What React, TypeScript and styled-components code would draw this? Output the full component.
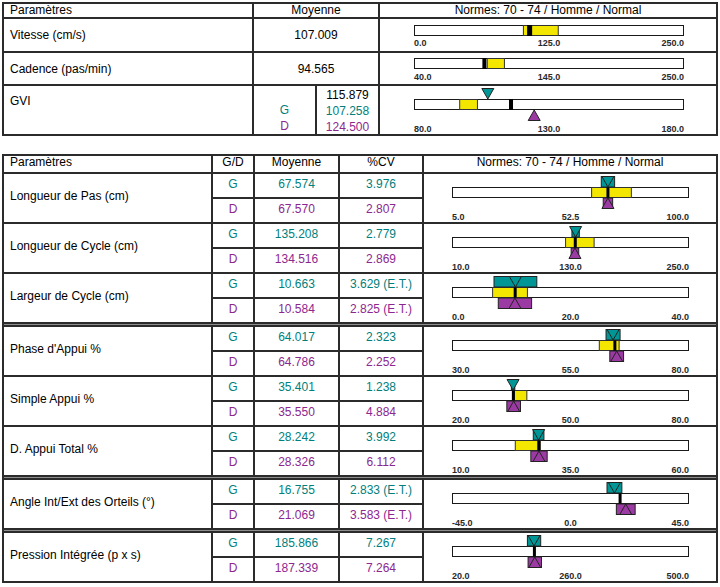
import React from "react";
import styled, { createGlobalStyle } from "styled-components";

// COLORS
const LINE = "#2b2b2b";
const TEAL = "#007f7d";
const PURPLE = "#8c2790";
const TEAL_FILL = "#009695";
const PURPLE_FILL = "#9c3aa3";
const YELLOW = "#f3e700";

type Side = { mean: number; sd: number };

interface ScaleChartProps {
  width: number;
  min: number;
  mid: number;
  max: number;
  norm?: [number, number];
  mean: number;
  meanWidth?: number;
  g?: Side;
  d?: Side;
  boxes?: boolean;
  labelGap?: number;
}

const GlobalStyle = createGlobalStyle`
  html, body {
    margin: 0;
    background: #fff;
  }
  body {
    font-family: "Liberation Sans", Arial, sans-serif;
    font-size: 12px;
    color: #000;
  }
`;

const Page = styled.div`
  width: 720px;
  box-sizing: border-box;
  padding: 2px 2px 0;
  display: flex;
  flex-direction: column;
  gap: 18px;
`;

// TOP TABLE
const SummaryTable = styled.div`
  display: grid;
  grid-template-columns: 248px 61px 61px 1fr;
  grid-template-rows: 13px 32px 31px 48px;
  gap: 2px;
  background: ${LINE};
  border: 2px solid ${LINE};
`;

const Cell = styled.div<{ $center?: boolean; $span?: number }>`
  background: #fff;
  display: flex;
  align-items: center;
  justify-content: ${(p) => (p.$center ? "center" : "flex-start")};
  padding: 0 6px;
  min-width: 0;
  overflow: hidden;
  white-space: nowrap;
  grid-column: ${(p) => (p.$span ? `span ${p.$span}` : "auto")};
`;

const HeadCell = styled(Cell)`
  align-items: flex-start;
  line-height: 12px;
`;

const TopLabelCell = styled(Cell)`
  align-items: flex-start;
  padding-top: 9px;
  line-height: 12px;
`;

const Stack = styled.div`
  background: #fff;
  display: flex;
  flex-direction: column;
  align-items: center;
  padding-top: 1px;
  line-height: 16px;
`;

const Tone = styled.span<{ $tone?: "g" | "d" }>`
  color: ${(p) => (p.$tone === "g" ? TEAL : p.$tone === "d" ? PURPLE : "#000")};
  height: 16px;
`;

const ChartCell = styled.div<{ $left: number; $top: number }>`
  background: #fff;
  display: flex;
  flex-direction: column;
  align-items: flex-start;
  padding-left: ${(p) => p.$left}px;
  padding-top: ${(p) => p.$top}px;
  overflow: hidden;
`;

// DETAIL TABLE
const DetailTable = styled.div`
  display: flex;
  flex-direction: column;
  gap: 2px;
  background: ${LINE};
  border: 2px solid ${LINE};
`;

const DetailRow = styled.div<{ $rows: string }>`
  display: grid;
  grid-template-columns: 207px 40px 83px 82px 1fr;
  grid-template-rows: ${(p) => p.$rows};
  gap: 2px;
`;

const GroupRule = styled.div`
  height: 1px;
  background: #8d8d8d;
`;

const ParamCell = styled(Cell)`
  grid-row: span 2;
  padding-bottom: 4px;
`;

const ValueCell = styled(Cell)<{ $tone: "g" | "d" }>`
  color: ${(p) => (p.$tone === "g" ? TEAL : PURPLE)};
  justify-content: center;
  padding-bottom: 4px;
`;

const GroupChartCell = styled(ChartCell)`
  grid-row: span 2;
`;

// CHART
const ChartWrap = styled.div<{ $w: number }>`
  width: ${(p) => p.$w}px;
  display: flex;
  flex-direction: column;
`;

const Plot = styled.svg`
  display: block;
  overflow: visible;
`;

const ScaleLabels = styled.div<{ $gap: number }>`
  display: grid;
  grid-template-columns: 1fr auto 1fr;
  margin-top: ${(p) => p.$gap}px;
  font-size: 9px;
  font-weight: bold;
  line-height: 10px;
  color: #2a2a2a;

  span:first-child {
    justify-self: start;
  }
  span:last-child {
    justify-self: end;
  }
`;

const ScaleChart: React.FC<ScaleChartProps> = ({
  width,
  min,
  mid,
  max,
  norm,
  mean,
  meanWidth = 3,
  g,
  d,
  boxes,
  labelGap = 3,
}) => {
  const x = (v: number) => ((v - min) / (max - min)) * (width - 1) + 0.5;
  const withMarkers = !!(g || d);
  const barTop = withMarkers ? 11 : 0;
  const height = withMarkers ? 33 : 11;
  const tri = 6;

  return (
    <ChartWrap $w={width}>
      <Plot width={width} height={height}>
        <rect x={0.5} y={barTop + 0.5} width={width - 1} height={10} fill="#fff" stroke="#1a1a1a" />
        {norm && (
          <rect
            x={x(norm[0])}
            y={barTop + 0.5}
            width={x(norm[1]) - x(norm[0])}
            height={10}
            fill={YELLOW}
            stroke="#333"
          />
        )}
        <rect x={x(mean) - meanWidth / 2} y={barTop} width={meanWidth} height={11} fill="#000" />

        {g && boxes && (
          <rect
            x={x(g.mean - g.sd)}
            y={0.5}
            width={x(g.mean + g.sd) - x(g.mean - g.sd)}
            height={10.5}
            fill={TEAL_FILL}
            stroke="#222"
          />
        )}
        {g && (
          <polygon
            points={`${x(g.mean) - tri},0.5 ${x(g.mean) + tri},0.5 ${x(g.mean)},${barTop}`}
            fill={TEAL_FILL}
            stroke="#222"
          />
        )}

        {d && boxes && (
          <rect
            x={x(d.mean - d.sd)}
            y={barTop + 11}
            width={x(d.mean + d.sd) - x(d.mean - d.sd)}
            height={10.5}
            fill={PURPLE_FILL}
            stroke="#222"
          />
        )}
        {d && (
          <polygon
            points={`${x(d.mean) - tri},${height - 0.5} ${x(d.mean) + tri},${height - 0.5} ${x(d.mean)},${barTop + 11}`}
            fill={PURPLE_FILL}
            stroke="#222"
          />
        )}
      </Plot>
      <ScaleLabels $gap={labelGap}>
        <span>{min.toFixed(1)}</span>
        <span>{mid.toFixed(1)}</span>
        <span>{max.toFixed(1)}</span>
      </ScaleLabels>
    </ChartWrap>
  );
};

// DATA
interface DetailParam {
  label: string;
  g: { mean: number; cv: number };
  d: { mean: number; cv: number };
  et?: boolean;
  scale: [number, number, number];
  norm?: [number, number];
}

type Group = DetailParam[];

const groups: Group[] = [
  [
    {
      label: "Longueur de Pas (cm)",
      g: { mean: 67.574, cv: 3.976 },
      d: { mean: 67.57, cv: 2.807 },
      scale: [5, 52.5, 100],
      norm: [61, 77],
    },
    {
      label: "Longueur de Cycle (cm)",
      g: { mean: 135.208, cv: 2.779 },
      d: { mean: 134.516, cv: 2.869 },
      scale: [10, 130, 250],
      norm: [125, 154],
    },
    {
      label: "Largeur de Cycle (cm)",
      g: { mean: 10.663, cv: 3.629 },
      d: { mean: 10.584, cv: 2.825 },
      et: true,
      scale: [0, 20, 40],
      norm: [6.8, 12.7],
    },
  ],
  [
    {
      label: "Phase d'Appui %",
      g: { mean: 64.017, cv: 2.323 },
      d: { mean: 64.786, cv: 2.252 },
      scale: [30, 55, 80],
      norm: [61.1, 65.3],
    },
    {
      label: "Simple Appui %",
      g: { mean: 35.401, cv: 1.238 },
      d: { mean: 35.55, cv: 4.884 },
      scale: [20, 50, 80],
      norm: [35.7, 38.9],
    },
    {
      label: "D. Appui Total %",
      g: { mean: 28.242, cv: 3.992 },
      d: { mean: 28.326, cv: 6.112 },
      scale: [10, 35, 60],
      norm: [23.3, 28.6],
    },
  ],
  [
    {
      label: "Angle Int/Ext des Orteils (°)",
      g: { mean: 16.755, cv: 2.833 },
      d: { mean: 21.069, cv: 3.583 },
      et: true,
      scale: [-45, 0, 45],
    },
  ],
  [
    {
      label: "Pression Intégrée (p x s)",
      g: { mean: 185.866, cv: 7.267 },
      d: { mean: 187.339, cv: 7.264 },
      scale: [20, 260, 500],
    },
  ],
];

const sdOf = (side: { mean: number; cv: number }, et?: boolean) =>
  et ? side.cv : (side.cv * side.mean) / 100;

const cvText = (cv: number, et?: boolean) => (et ? `${cv.toFixed(3)} (E.T.)` : cv.toFixed(3));

const DetailGroupRow: React.FC<{ p: DetailParam }> = ({ p }) => (
  <DetailRow $rows="23px 23px">
    <ParamCell>{p.label}</ParamCell>
    <ValueCell $tone="g">G</ValueCell>
    <ValueCell $tone="g">{p.g.mean.toFixed(3)}</ValueCell>
    <ValueCell $tone="g">{cvText(p.g.cv, p.et)}</ValueCell>
    <GroupChartCell $left={28} $top={2}>
      <ScaleChart
        width={237}
        min={p.scale[0]}
        mid={p.scale[1]}
        max={p.scale[2]}
        norm={p.norm}
        mean={(p.g.mean + p.d.mean) / 2}
        g={{ mean: p.g.mean, sd: sdOf(p.g, p.et) }}
        d={{ mean: p.d.mean, sd: sdOf(p.d, p.et) }}
        boxes
      />
    </GroupChartCell>
    <ValueCell $tone="d">D</ValueCell>
    <ValueCell $tone="d">{p.d.mean.toFixed(3)}</ValueCell>
    <ValueCell $tone="d">{cvText(p.d.cv, p.et)}</ValueCell>
  </DetailRow>
);

const NORMES = "Normes: 70 - 74 / Homme / Normal";

export default function App() {
  return (
    <>
      <GlobalStyle />
      <Page>
        <SummaryTable>
          <HeadCell>Paramètres</HeadCell>
          <HeadCell $center $span={2}>Moyenne</HeadCell>
          <HeadCell $center>{NORMES}</HeadCell>

          <Cell>Vitesse (cm/s)</Cell>
          <Cell $center $span={2}>107.009</Cell>
          <ChartCell $left={34} $top={6}>
            <ScaleChart width={270} min={0} mid={125} max={250} norm={[101.2, 133.6]} mean={107.009} meanWidth={5} labelGap={2} />
          </ChartCell>

          <Cell>Cadence (pas/min)</Cell>
          <Cell $center $span={2}>94.565</Cell>
          <ChartCell $left={34} $top={5}>
            <ScaleChart width={270} min={40} mid={145} max={250} norm={[96.8, 110.2]} mean={94.565} meanWidth={4} />
          </ChartCell>

          <TopLabelCell>GVI</TopLabelCell>
          <Stack>
            <Tone />
            <Tone $tone="g">G</Tone>
            <Tone $tone="d">D</Tone>
          </Stack>
          <Stack>
            <Tone>115.879</Tone>
            <Tone $tone="g">107.258</Tone>
            <Tone $tone="d">124.500</Tone>
          </Stack>
          <ChartCell $left={34} $top={2}>
            <ScaleChart
              width={270}
              min={80}
              mid={130}
              max={180}
              norm={[96.8, 103.4]}
              mean={115.879}
              meanWidth={4}
              g={{ mean: 107.258, sd: 0 }}
              d={{ mean: 124.5, sd: 0 }}
            />
          </ChartCell>
        </SummaryTable>

        <DetailTable>
          <DetailRow $rows="16px">
            <HeadCell>Paramètres</HeadCell>
            <HeadCell $center>G/D</HeadCell>
            <HeadCell $center>Moyenne</HeadCell>
            <HeadCell $center>%CV</HeadCell>
            <HeadCell $center>{NORMES}</HeadCell>
          </DetailRow>
          {groups.map((group, gi) => (
            <React.Fragment key={gi}>
              {gi > 0 && <GroupRule />}
              {group.map((p) => (
                <DetailGroupRow key={p.label} p={p} />
              ))}
            </React.Fragment>
          ))}
        </DetailTable>
      </Page>
    </>
  );
}
